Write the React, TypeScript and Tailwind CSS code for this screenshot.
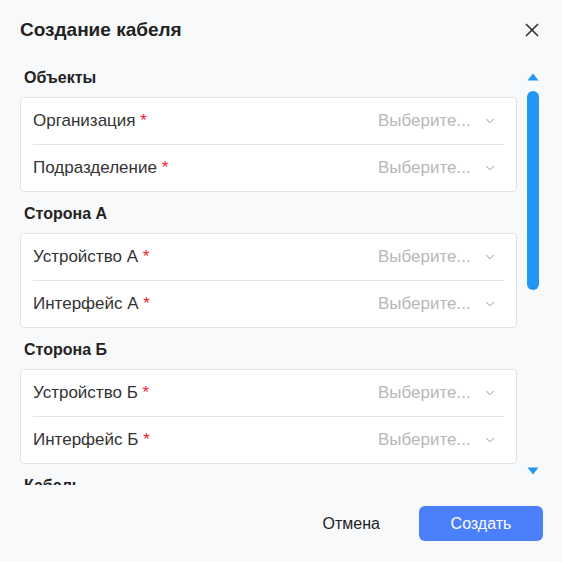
import { X, ChevronDown } from 'lucide-react'

const sections = [
  { title: 'Объекты', fields: ['Организация', 'Подразделение'] },
  { title: 'Сторона А', fields: ['Устройство А', 'Интерфейс А'] },
  { title: 'Сторона Б', fields: ['Устройство Б', 'Интерфейс Б'] },
  { title: 'Кабель', fields: [] as string[] },
]

function Field({ label }: { label: string }) {
  return (
    <div className="flex h-[46px] items-center px-[12px]">
      <span className="flex-1 text-[17px] text-[#333333]">
        {label} <span className="text-[#f5222d]">*</span>
      </span>
      <span className="w-[94px] truncate text-[17px] text-[#b8b8b8]">Выберите...</span>
      <ChevronDown className="ml-[11px] mr-[7px] h-[14px] w-[14px] text-[#999999]" strokeWidth={1.7} />
    </div>
  )
}

export default function App() {
  return (
    <div
      className="flex h-[562px] w-[562px] flex-col bg-[#f8f9fb]"
      style={{ fontFamily: '"Liberation Sans", Arial, sans-serif' }}
    >
      <div className="flex h-[56px] items-center justify-between pl-[20px] pr-[19px] pt-[4px]">
        <h1 className="text-[19px] font-bold text-[#222222]">Создание кабеля</h1>
        <X className="h-[22px] w-[22px] text-[#333333]" strokeWidth={1.8} />
      </div>

      <div className="flex">
        <div className="h-[429px] w-[517px] overflow-hidden pl-[20px]">
          {sections.map((s) => (
            <div key={s.title} className="pt-[12px]">
              <div className="mb-[9px] h-[20px] pl-[4px] text-[16px] font-bold leading-[20px] text-[#222222]">
                {s.title}
              </div>
              {s.fields.length > 0 && (
                <div className="rounded-[4px] border border-[#e3e4e8] bg-white">
                  <Field label={s.fields[0]} />
                  <div className="mx-[12px] h-px bg-[#e3e4e8]" />
                  <Field label={s.fields[1]} />
                </div>
              )}
            </div>
          ))}
        </div>

        <div className="ml-[10px] flex w-[12px] flex-col items-center pt-[17px]">
          <svg width="12" height="8" viewBox="0 0 12 8">
            <path d="M6 0.5 L11.5 7.5 L0.5 7.5 Z" fill="#2196f3" strokeLinejoin="round" />
          </svg>
          <div className="mt-[10px] h-[199px] w-[12px] rounded-full bg-[#2196f3]" />
          <div className="mt-[177px]">
            <svg width="12" height="8" viewBox="0 0 12 8">
              <path d="M0.5 0.5 L11.5 0.5 L6 7.5 Z" fill="#2196f3" strokeLinejoin="round" />
            </svg>
          </div>
        </div>
      </div>

      <div className="mt-[21px] flex items-center justify-end pr-[19px]">
        <button className="h-[35px] text-[16px] text-[#222222]">Отмена</button>
        <button className="ml-[39px] h-[35px] w-[124px] rounded-[6px] bg-[#4a80fc] text-[16px] text-white">
          Создать
        </button>
      </div>
    </div>
  )
}
